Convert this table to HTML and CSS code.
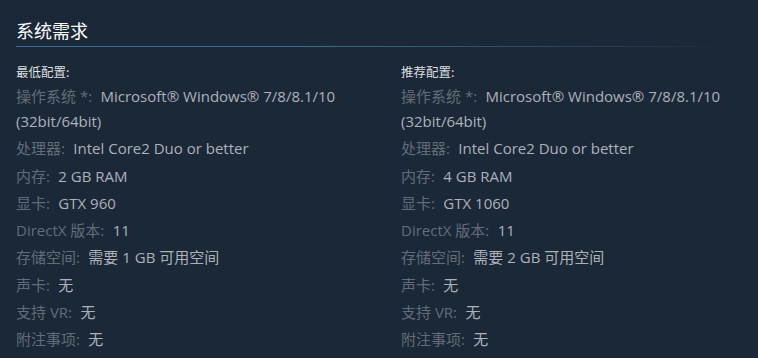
FILE: index.html
```html
<!DOCTYPE html>
<html lang="zh-CN">
<head>
<meta charset="utf-8">
<link rel="stylesheet" href="styles.css">
</head>
<body>
<div class="sysreq">
  <h2 class="title">系统需求</h2>
  <div class="cols">
    <div class="col">
      <div class="colhead">最低配置:</div>
      <ul class="list">
        <li><span class="lbl">操作系统 *:</span> Microsoft® Windows® 7/8/8.1/10 (32bit/64bit)</li>
        <li><span class="lbl">处理器:</span> Intel Core2 Duo or better</li>
        <li><span class="lbl">内存:</span> 2 GB RAM</li>
        <li><span class="lbl">显卡:</span> GTX 960</li>
        <li><span class="lbl">DirectX 版本:</span> 11</li>
        <li><span class="lbl">存储空间:</span> 需要 1 GB 可用空间</li>
        <li><span class="lbl">声卡:</span> 无</li>
        <li><span class="lbl">支持 VR:</span> 无</li>
        <li><span class="lbl">附注事项:</span> 无</li>
      </ul>
    </div>
    <div class="col">
      <div class="colhead">推荐配置:</div>
      <ul class="list">
        <li><span class="lbl">操作系统 *:</span> Microsoft® Windows® 7/8/8.1/10 (32bit/64bit)</li>
        <li><span class="lbl">处理器:</span> Intel Core2 Duo or better</li>
        <li><span class="lbl">内存:</span> 4 GB RAM</li>
        <li><span class="lbl">显卡:</span> GTX 1060</li>
        <li><span class="lbl">DirectX 版本:</span> 11</li>
        <li><span class="lbl">存储空间:</span> 需要 2 GB 可用空间</li>
        <li><span class="lbl">声卡:</span> 无</li>
        <li><span class="lbl">支持 VR:</span> 无</li>
        <li><span class="lbl">附注事项:</span> 无</li>
      </ul>
    </div>
  </div>
</div>
</body>
</html>
```
FILE: styles.css
```css
html, body {
  margin: 0;
  padding: 0;
  background: #1b2838;
}
body {
  font-family: "Open Sans", "Noto Sans CJK SC", sans-serif;
  color: #acb2b8;
  overflow: hidden;
}
.sysreq {
  padding: 17px 16px 0 16px;
}
.title {
  margin: 0 8px 0 0;
  font-family: "Noto Sans CJK SC", sans-serif;
  font-weight: 400;
  font-size: 18px;
  line-height: 26px;
  color: #ffffff;
  padding-bottom: 4px;
  background-image: linear-gradient(to right, #3b6e8c 0%, #3b6e8c 40%, rgba(59,110,140,0.35) 80%, rgba(59,110,140,0) 100%);
  background-size: 100% 1px;
  background-repeat: no-repeat;
  background-position: left bottom;
}
.cols {
  display: grid;
  grid-template-columns: 385px 1fr;
  margin-top: 12px;
}
.colhead {
  font-family: "Noto Sans CJK SC", sans-serif;
  font-size: 12.5px;
  font-weight: 400;
  line-height: 25px;
  color: #dcdedf;
}
.list {
  list-style: none;
  margin: 0;
  padding: 0;
  font-size: 15px;
  line-height: 25px;
}
.list li {
  margin-bottom: 2.25px;
  padding-right: 20px;
}
.lbl {
  color: #626d77;
  margin-right: 4.5px;
}
```
